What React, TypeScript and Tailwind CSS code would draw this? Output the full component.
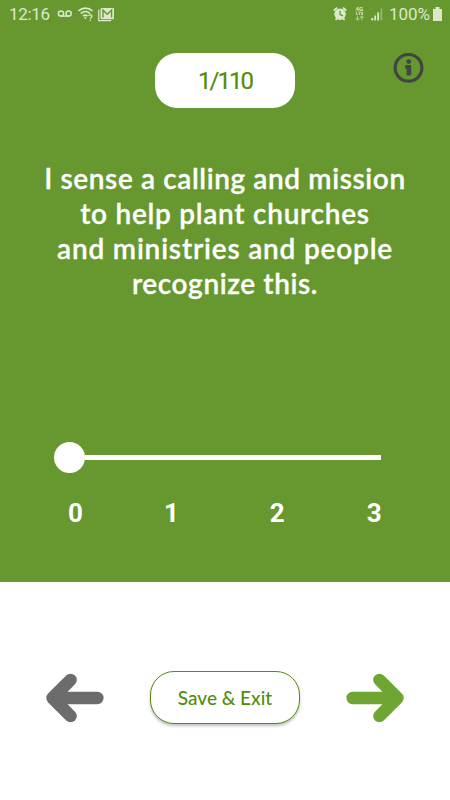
import { useState } from "react";

const QUESTION = [
  { text: "I sense a calling and mission", track: "tracking-[0.6px]" },
  { text: "to help plant churches", track: "tracking-[0.73px]" },
  { text: "and ministries and people", track: "tracking-[0.8px]" },
  { text: "recognize this.", track: "tracking-[0.6px]" },
];

const SCALE = [
  { n: 0, pad: "" },
  { n: 1, pad: "ml-[81px]" },
  { n: 2, pad: "ml-[91px]" },
  { n: 3, pad: "ml-[82px]" },
];

function StatusBar() {
  return (
    <div className="flex h-7 items-center justify-between pl-[9px] pr-[8px] text-[#dbe8cc]">
      <div className="flex items-center">
        <span className="w-[41px] whitespace-nowrap text-[17px] leading-7 tracking-[-0.3px]">12:16</span>
        {/* voicemail, wifi, mail */}
        <svg width="66" height="18" viewBox="50 4 66 18" fill="none" stroke="currentColor">
          <g strokeWidth="1.5">
            <circle cx="61" cy="12.5" r="2.6" />
            <circle cx="68.6" cy="12.5" r="2.6" />
            <path d="M61 15.1h7.6" />
          </g>
          <g strokeWidth="1.6">
            <path d="M78.3 10c4.2-3.9 10.1-3.9 14.2 0M80.8 12.6c2.8-2.6 6.5-2.6 9.2 0M83.1 15.1c1.4-1.3 3-1.3 4.4 0" />
            <path d="M88.8 15c.3-1.5 3.5-1.4 3.2.4-.2 1-1.5 1.2-1.6 2.3M90.3 18.7v1.4" strokeWidth="1.3" />
          </g>
          <circle cx="85.3" cy="17" r="1" fill="currentColor" stroke="none" />
          <path d="M98.8 8.7v11h12.4" strokeWidth="1.3" />
          <rect x="100.6" y="6.9" width="13.4" height="11.3" rx="1" fill="currentColor" stroke="none" />
          <path d="M103 16.4V9.2l4.3 4 4.3-4v7.2" stroke="#66982f" strokeWidth="1.4" />
        </svg>
      </div>
      <div className="flex items-center">
        {/* alarm, 4G LTE, signal */}
        <svg width="54" height="20" viewBox="334 3 54 20" fill="none" stroke="currentColor">
          <path d="M334.8 9.5l3.4-2.8M347.4 9.5l-3.4-2.8M336.6 18.8l1.3-1.3M345.6 18.8l-1.3-1.3" strokeWidth="1.8" />
          <circle cx="341.1" cy="13.2" r="5.7" fill="currentColor" stroke="none" />
          <path d="M341.1 9.8v3.7l2.8 1.4" stroke="#66982f" strokeWidth="1.3" />
          <text x="356.6" y="10.4" fontSize="6" fontWeight="700" fill="currentColor" stroke="none">4G</text>
          <path d="M357.4 10.6v3h1.8M359.4 11.1h2.4M360.6 11.1v2.9M364.2 11.1h-1.6v2.5h1.6M362.6 12.4h1.4" strokeWidth="0.8" />
          <path d="M358.6 15v4M356.9 17.4l1.7 1.7 1.7-1.7M362.8 19.2v-4M361.1 16.8l1.7-1.7 1.7 1.7" strokeWidth="1.1" opacity=".6" />
          <path d="M373.3 19.4v-2.5M376.2 19.4v-5M379.2 19.4v-8" strokeWidth="1.8" />
          <path d="M382.4 19.4V7.5" strokeWidth="1.8" opacity=".4" />
        </svg>
        <span className="ml-[2px] mr-[3px] whitespace-nowrap text-[17px] leading-7">100%</span>
        <svg width="9" height="14" viewBox="0 0 9 14" fill="currentColor">
          <path d="M2.5 0h4v2H9v12H0V2h2.5z" />
        </svg>
      </div>
    </div>
  );
}

function Arrow({ flip = false }: { flip?: boolean }) {
  return (
    <svg
      width="58"
      height="50"
      viewBox="0 0 58 50"
      fill="none"
      stroke="currentColor"
      strokeWidth="12.4"
      strokeLinecap="round"
      strokeLinejoin="round"
      className={flip ? "-scale-x-100" : ""}
    >
      <path d="M24.6 6.9L6.5 25l18.1 18.1M10 25h41.4" />
    </svg>
  );
}

export default function App() {
  const [value, setValue] = useState(0);

  return (
    <div className="flex h-[800px] w-[450px] flex-col overflow-hidden bg-white font-['Roboto',sans-serif]">
      <div className="flex h-[582px] flex-col bg-[#66982f]">
        <StatusBar />

        <div className="mt-[25px] grid grid-cols-[1fr_140px_1fr] items-start">
          <div />
          <div className="flex h-[55px] items-center justify-center rounded-[22px] bg-white text-[24px] tracking-[-2px] text-[#528d0d] [-webkit-text-stroke:0.2px]">
            1/110
          </div>
          <button className="mr-[26px] justify-self-end text-[#424542]" aria-label="Info">
            <svg width="31" height="31" viewBox="0 0 31 31" fill="none">
              <circle cx="15.5" cy="14.8" r="13.4" stroke="currentColor" strokeWidth="3.2" />
              <circle cx="15.8" cy="8.6" r="2.4" fill="currentColor" />
              <path d="M12.7 12.6h5v9.4h-3.6v-6.6h-1.4z" fill="currentColor" stroke="currentColor" strokeWidth="1" strokeLinejoin="round" />
            </svg>
          </button>
        </div>

        <h1 className="mt-[53px] flex flex-col items-center font-['Lato',sans-serif] text-[28px] font-semibold leading-[35px] text-white [-webkit-text-stroke:0.3px]">
          {QUESTION.map((l) => (
            <span key={l.text} className={`whitespace-nowrap ${l.track}`}>
              {l.text}
            </span>
          ))}
        </h1>

        <div className="ml-[54px] mt-[141px] flex h-[31px] w-[327px] items-center">
          <div className="size-[31px] shrink-0 rounded-full bg-white" />
          <div className="h-[5px] flex-1 bg-white" />
        </div>

        <div className="ml-[68px] mt-[24px] flex text-[26px] font-bold leading-[32px] text-white">
          {SCALE.map(({ n, pad }) => (
            <button key={n} className={pad} aria-pressed={value === n} onClick={() => setValue(n)}>
              {n}
            </button>
          ))}
        </div>
      </div>

      <div className="flex flex-1 items-start justify-between px-[46px] pt-[89px]">
        <button className="mt-[2px] text-[#6c6c6c]" aria-label="Previous">
          <Arrow />
        </button>
        <button className="h-[53px] w-[150px] rounded-[24px] border border-[#528d0d] bg-white pt-[2px] font-['Lato',sans-serif] text-[19px] font-medium text-[#528d0d] shadow-[0_2px_3px_rgba(0,0,0,0.25)]">
          Save &amp; Exit
        </button>
        <button className="mt-[2px] text-[#6fa532]" aria-label="Next">
          <Arrow flip />
        </button>
      </div>
    </div>
  );
}
